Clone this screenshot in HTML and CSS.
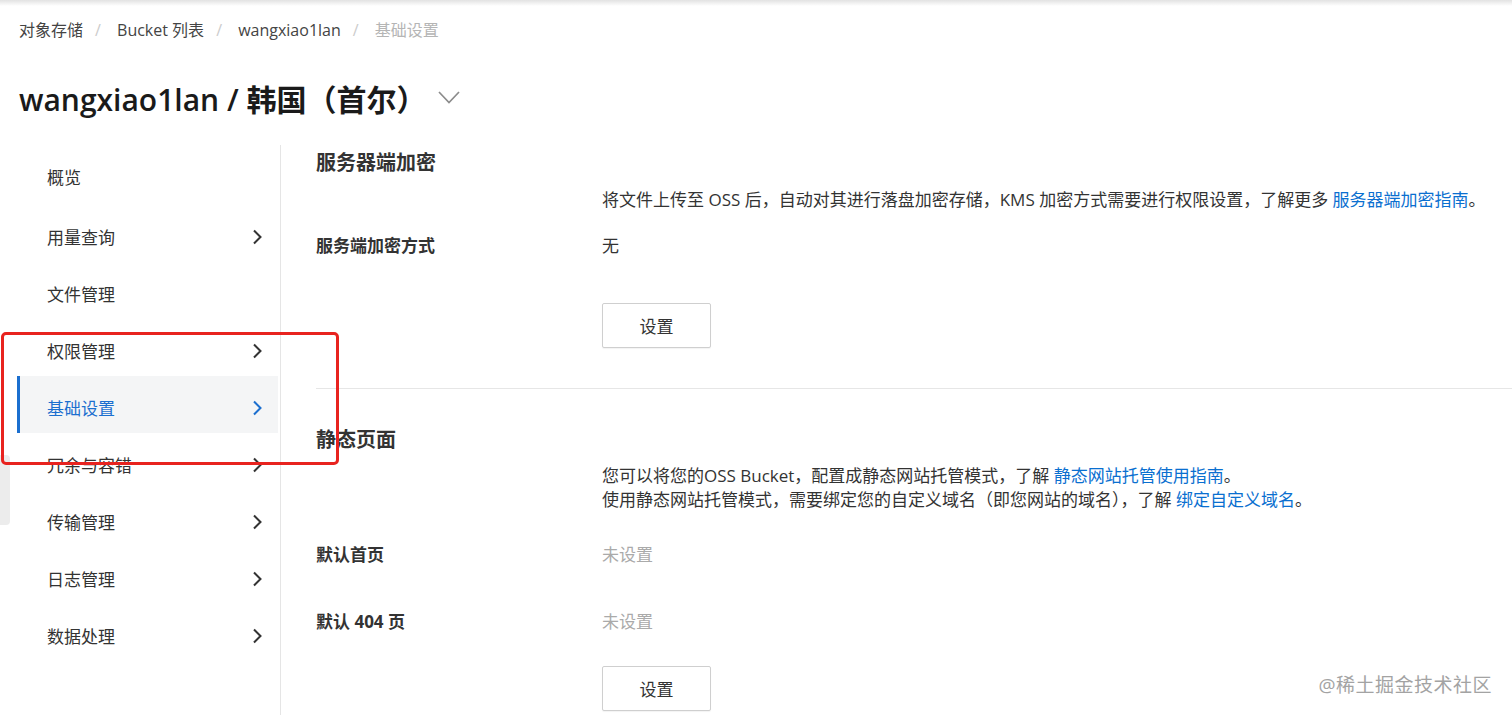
FILE: index.html
```
<!DOCTYPE html>
<html lang="zh-CN">
<head>
  <meta charset="UTF-8" />
  <title>基础设置 - wangxiao1lan</title>
  <link rel="stylesheet" href="styles.css">
</head>
<body>
  <div class="page">
    <nav class="breadcrumb">
      <a>对象存储</a><span class="sep">/</span>
      <a>Bucket 列表</a><span class="sep">/</span>
      <a>wangxiao1lan</a><span class="sep">/</span>
      <span class="current">基础设置</span>
    </nav>

    <div class="title-row">
      <h1>wangxiao1lan / 韩国（首尔）</h1>
      <svg class="title-caret" width="22" height="13" viewBox="0 0 22 13"><path d="M1 1 L11 11.5 L21 1" /></svg>
    </div>

    <div class="main">
      <aside class="sidenav">
        <ul>
          <li class="first">概览</li>
          <li>用量查询<svg class="arrow" width="10" height="16" viewBox="0 0 10 16"><path d="M2 1.5 L8.5 8 L2 14.5" /></svg></li>
          <li>文件管理</li>
          <li>权限管理<svg class="arrow" width="10" height="16" viewBox="0 0 10 16"><path d="M2 1.5 L8.5 8 L2 14.5" /></svg></li>
          <li class="active">基础设置<svg class="arrow" width="10" height="16" viewBox="0 0 10 16"><path d="M2 1.5 L8.5 8 L2 14.5" /></svg></li>
          <li>冗余与容错<svg class="arrow" width="10" height="16" viewBox="0 0 10 16"><path d="M2 1.5 L8.5 8 L2 14.5" /></svg></li>
          <li>传输管理<svg class="arrow" width="10" height="16" viewBox="0 0 10 16"><path d="M2 1.5 L8.5 8 L2 14.5" /></svg></li>
          <li>日志管理<svg class="arrow" width="10" height="16" viewBox="0 0 10 16"><path d="M2 1.5 L8.5 8 L2 14.5" /></svg></li>
          <li>数据处理<svg class="arrow" width="10" height="16" viewBox="0 0 10 16"><path d="M2 1.5 L8.5 8 L2 14.5" /></svg></li>
        </ul>
      </aside>

      <section class="content">
        <div class="block block-encrypt">
          <h2>服务器端加密</h2>
          <div class="row desc">
            <div></div>
            <div>将文件上传至 OSS 后，自动对其进行落盘加密存储，KMS 加密方式需要进行权限设置，了解更多 <a>服务器端加密指南</a>。</div>
          </div>
          <div class="row field field-method">
            <div class="label">服务端加密方式</div>
            <div>无</div>
          </div>
          <div class="row actions actions-encrypt">
            <div></div>
            <div><button class="btn">设置</button></div>
          </div>
        </div>

        <div class="block block-static">
          <h2>静态页面</h2>
          <div class="row desc">
            <div></div>
            <div>
              您可以将您的OSS Bucket，配置成静态网站托管模式，了解 <a>静态网站托管使用指南</a>。<br>
              使用静态网站托管模式，需要绑定您的自定义域名（即您网站的域名），了解 <a>绑定自定义域名</a>。
            </div>
          </div>
          <div class="row field field-index">
            <div class="label">默认首页</div>
            <div class="muted">未设置</div>
          </div>
          <div class="row field field-404">
            <div class="label">默认 404 页</div>
            <div class="muted">未设置</div>
          </div>
          <div class="row actions actions-static">
            <div></div>
            <div><button class="btn">设置</button></div>
          </div>
        </div>
      </section>
    </div>
  </div>

  <div class="side-tab"></div>
  <div class="annot-box"></div>
  <div class="watermark">@稀土掘金技术社区</div>
</body>
</html>
```

FILE: styles.css
```
html, body {
  margin: 0;
  height: 100%;
  overflow: hidden;
}
body {
  font-family: "Open Sans", "Noto Sans CJK SC", sans-serif;
  color: #333;
  font-size: 17px;
  background: linear-gradient(#e2e2e2, #fff 6px) no-repeat, #fff;
  position: relative;
}
a {
  color: #0a6fd0;
  cursor: pointer;
}
.page {
  padding-top: 18px;
}
.breadcrumb {
  padding-left: 19px;
  line-height: 24px;
  font-size: 16px;
  color: #444;
}
.breadcrumb a {
  color: #444;
}
.breadcrumb .sep {
  color: #ccc;
  margin: 0 12px;
}
.breadcrumb .current {
  color: #b5b5b5;
}
.title-row {
  display: flex;
  align-items: center;
  padding-left: 19px;
  margin-top: 38px;
  height: 40px;
}
h1 {
  margin: 0;
  font-size: 30px;
  font-weight: 600;
  line-height: 40px;
  color: #1a1a1a;
}
.title-caret {
  margin-left: 12px;
  margin-top: -6px;
}
.title-caret path {
  fill: none;
  stroke: #8c8c8c;
  stroke-width: 1.7;
}
.main {
  display: flex;
  margin-top: 25px;
  height: 570px;
}
.sidenav {
  width: 263px;
  padding: 3px 0 0 17px;
  border-right: 1px solid #e5e5e5;
  flex-shrink: 0;
}
.sidenav ul {
  list-style: none;
  margin: 0;
  padding: 0;
  width: 261px;
}
.sidenav li {
  height: 57px;
  box-sizing: border-box;
  padding: 6px 16px 0 27px;
  border-left: 3px solid transparent;
  display: flex;
  align-items: center;
  justify-content: space-between;
}
.sidenav li.first {
  padding-top: 0;
}
.sidenav li.active {
  border-left-color: #1b6fcf;
  background: #f4f5f6;
  color: #1b6fcf;
}
.arrow path {
  fill: none;
  stroke: currentColor;
  stroke-width: 2;
}
.content {
  flex: 1;
  padding: 4px 0 0 35px;
}
h2 {
  margin: 0;
  font-size: 20px;
  line-height: 28px;
  font-weight: 700;
}
.row {
  display: grid;
  grid-template-columns: 286px 1fr;
  line-height: 24px;
}
.desc {
  margin-top: 11px;
}
.label {
  font-weight: 700;
}
.muted {
  color: #aaa;
}
.field-method { margin-top: 22px; }
.actions-encrypt { margin-top: 45px; }
.block-encrypt {
  padding-bottom: 40px;
  border-bottom: 1px solid #e6e6e6;
}
.block-static {
  padding-top: 37px;
}
.block-static .desc { margin-top: 10px; }
.field-index { margin-top: 31px; }
.field-404 { margin-top: 43px; }
.actions-static { margin-top: 32px; }
.btn {
  width: 109px;
  height: 45px;
  background: #fff;
  border: 1px solid #cfcfcf;
  border-radius: 2px;
  font-family: inherit;
  font-size: 17px;
  color: #333;
  box-shadow: 0 1px 1px rgb(0 0 0 / 0.05);
}
.side-tab {
  position: absolute;
  left: 0;
  top: 455px;
  width: 10px;
  height: 70px;
  background: #ececec;
  border-radius: 0 4px 4px 0;
}
.annot-box {
  position: absolute;
  left: 1px;
  top: 332px;
  width: 332px;
  height: 127px;
  border: 3.5px solid #e8231f;
  border-radius: 5px;
  pointer-events: none;
}
.watermark {
  position: absolute;
  right: 20px;
  top: 673px;
  font-size: 19px;
  line-height: 24px;
  color: #a3a3a3;
  letter-spacing: 0.5px;
}
```
